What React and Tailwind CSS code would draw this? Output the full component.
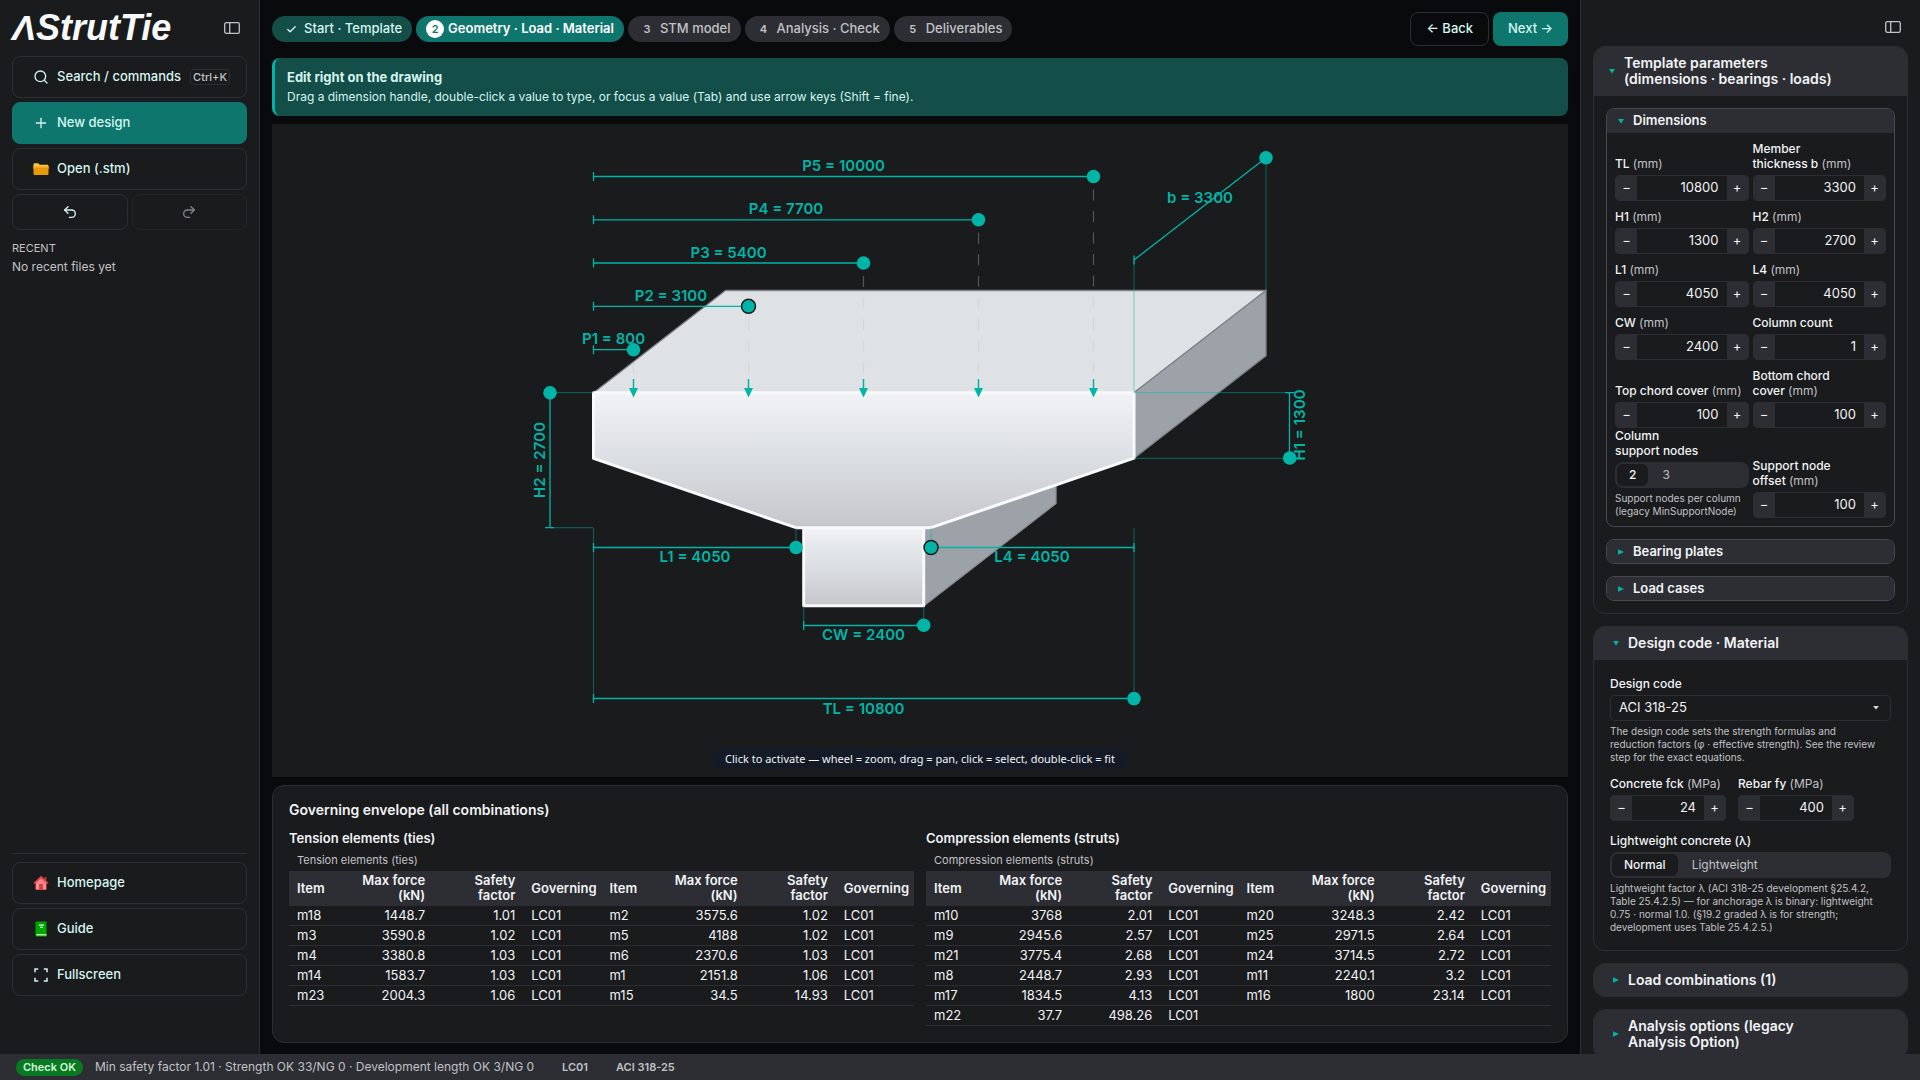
import { useState } from "react";
import { Search, Plus, Undo2, Redo2, Check } from "lucide-react";
import { twMerge } from "tailwind-merge";

const ties = [
  ["m18", "1448.7", "1.01", "LC01", "m2", "3575.6", "1.02", "LC01"],
  ["m3", "3590.8", "1.02", "LC01", "m5", "4188", "1.02", "LC01"],
  ["m4", "3380.8", "1.03", "LC01", "m6", "2370.6", "1.03", "LC01"],
  ["m14", "1583.7", "1.03", "LC01", "m1", "2151.8", "1.06", "LC01"],
  ["m23", "2004.3", "1.06", "LC01", "m15", "34.5", "14.93", "LC01"],
];

const struts = [
  ["m10", "3768", "2.01", "LC01", "m20", "3248.3", "2.42", "LC01"],
  ["m9", "2945.6", "2.57", "LC01", "m25", "2971.5", "2.64", "LC01"],
  ["m21", "3775.4", "2.68", "LC01", "m24", "3714.5", "2.72", "LC01"],
  ["m8", "2448.7", "2.93", "LC01", "m11", "2240.1", "3.2", "LC01"],
  ["m17", "1834.5", "4.13", "LC01", "m16", "1800", "23.14", "LC01"],
  ["m22", "37.7", "498.26", "LC01", "", "", "", ""],
];

const steps = [
  { title: "Start · Template", state: "done" },
  { title: "Geometry · Load · Material", state: "active" },
  { title: "STM model", state: "todo" },
  { title: "Analysis · Check", state: "todo" },
  { title: "Deliverables", state: "todo" },
];

const stepClasses = {
  done: "bg-[#134e48] text-[#d5f5f0] font-medium",
  active: "bg-[#0f766e] text-white font-semibold",
  todo: "bg-[#2c2e33] text-[#c1c2c5] font-medium",
};

/* ---------- icons ---------- */

const PanelIcon = () => (
  <svg width="16" height="12" viewBox="0 0 16 12" fill="none" stroke="#c1c2c5" strokeWidth="1.3">
    <rect x="0.7" y="0.7" width="14.6" height="10.6" rx="1.6" />
    <path d="M5.7 0.7v10.6" />
  </svg>
);

const FolderIcon = () => (
  <svg width="16" height="16" viewBox="0 0 16 16">
    <path d="M0.5 3.4q0-1.2 1.2-1.2h3.6l1.4 1.6h7.6q1.2 0 1.2 1.2v3h-15z" fill="#ffc83d" />
    <path d="M0.5 5.6h15v7.2q0 1.2-1.2 1.2H1.7q-1.2 0-1.2-1.2z" fill="#e89a08" />
    <path d="M0.5 5.4h15v1.2h-15z" fill="#ffb02e" />
  </svg>
);

const HomeIcon = () => (
  <svg width="16" height="16" viewBox="0 0 16 16">
    <path d="M11.3 2h2v4h-2z" fill="#c0392f" />
    <path d="M2.6 7.6 8 2.6l5.4 5v7.2H2.6z" fill="#ff8687" />
    <path d="M8 0.8 0.4 7.9l1.2 1.2L8 3.4l6.4 5.7 1.2-1.2z" fill="#e0444a" />
    <path d="M6.2 9h3.6v5.8H6.2z" fill="#d33b42" />
  </svg>
);

const BookIcon = () => (
  <svg width="16" height="16" viewBox="0 0 16 16">
    <path d="M2.5 1.6q0-1.1 1.1-1.1h9.9v15H3.6q-1.1 0-1.1-1.1z" fill="#00a600" />
    <path d="M3.4 13h10.1v1.5H3.4z" fill="#b9e8a0" />
    <path d="M6 3.5h5v1.2H6zM7 5.8h3v1H7z" fill="#eafbe4" />
  </svg>
);

const FullscreenIcon = () => (
  <svg width="16" height="16" viewBox="0 0 16 16" fill="none" stroke="#d5f5f0" strokeWidth="1.5">
    <path d="M2 5.2V2h3.2M10.8 2H14v3.2M14 10.8V14h-3.2M5.2 14H2v-3.2" />
  </svg>
);

const Caret = ({ open }) => (
  <svg width="8" height="8" viewBox="0 0 8 8" fill="#00b5a7" className="shrink-0">
    {open ? <path d="M1 2h6L4 6.4z" /> : <path d="M1 1.2v5.6L7 4z" />}
  </svg>
);

/* ---------- sidebar ---------- */

const SideButton = (props) => {
  const { icon, title, className = "", children } = props;
  const defaultClasses =
    "flex h-[42px] w-full shrink-0 items-center gap-2 rounded-lg border border-[#2c2e33] px-5 text-[13px] font-medium text-[#d5f5f0]";
  return (
    <button type="button" className={twMerge(defaultClasses, className)}>
      {icon}
      <span>{title}</span>
      {children}
    </button>
  );
};

const Sidebar = () => (
  <aside className="flex w-[260px] shrink-0 flex-col border-r border-[#2c2e33] bg-[#1a1b1d] px-3">
    <div className="flex h-14 shrink-0 items-center justify-between pr-[7px]">
      <h1 className="font-['Liberation_Sans',sans-serif] text-[36px] leading-9 font-bold text-[#f8f9fa] italic">
        ΛStrutTie
      </h1>
      <button type="button" aria-label="Toggle sidebar">
        <PanelIcon />
      </button>
    </div>

    <nav className="flex flex-col gap-1">
      <SideButton icon={<Search size={16} />} title="Search / commands" className="pr-4">
        <kbd className="ml-auto rounded border border-[#2c2e33] px-0.5 font-['Inter',sans-serif] text-[11px] leading-[14px] text-[#c1c2c5]">
          Ctrl+K
        </kbd>
      </SideButton>
      <SideButton
        icon={<Plus size={16} />}
        title="New design"
        className="border-[#0f766e] bg-[#0f766e]"
      />
      <SideButton icon={<FolderIcon />} title="Open (.stm)" />
      <div className="grid grid-cols-2 gap-1">
        <button
          type="button"
          aria-label="Undo"
          className="flex h-9 items-center justify-center rounded-lg border border-[#2c2e33] text-[#d5f5f0]"
        >
          <Undo2 size={16} />
        </button>
        <button
          type="button"
          aria-label="Redo"
          disabled
          className="flex h-9 items-center justify-center rounded-lg border border-[#2c2e33] text-[#d5f5f0] opacity-50"
        >
          <Redo2 size={16} />
        </button>
      </div>
    </nav>

    <h2 className="mt-3 text-[11px] leading-[13px] text-[#c1c2c5]">RECENT</h2>
    <p className="mt-1 text-[12px] leading-4 text-[#c1c2c5]">No recent files yet</p>

    <div className="mt-auto mb-[58px] flex flex-col gap-1 border-t border-[#2c2e33] pt-2">
      <SideButton icon={<HomeIcon />} title="Homepage" />
      <SideButton icon={<BookIcon />} title="Guide" />
      <SideButton icon={<FullscreenIcon />} title="Fullscreen" />
    </div>
  </aside>
);

/* ---------- drawing ---------- */

const loadPoints = [
  { label: "P5 = 10000", x: 1093.5, y: 176.5 },
  { label: "P4 = 7700", x: 978.5, y: 219.8 },
  { label: "P3 = 5400", x: 863.5, y: 263 },
  { label: "P2 = 3100", x: 748.5, y: 306.3, ring: true },
  { label: "P1 = 800", x: 633.5, y: 349.7 },
];

const Handle = ({ x, y, ring }) => (
  <circle cx={x} cy={y} r={ring ? 7 : 6.8} fill="#00b5a7" stroke={ring ? "#1a1b1d" : "none"} strokeWidth="1.5" />
);

const DimText = ({ x, y, vertical, children }) => (
  <text
    x={x}
    y={y}
    textAnchor="middle"
    dominantBaseline="central"
    transform={vertical ? `rotate(-90 ${x} ${y})` : undefined}
    fill="#00b5a7"
    className="font-['Inter',sans-serif] text-[15px] font-semibold"
  >
    {children}
  </text>
);

const Drawing = () => (
  <svg viewBox="272 124 1296 653" className="block h-full w-full">
    <defs>
      <linearGradient id="front" x1="0" y1="0" x2="0" y2="1">
        <stop offset="0" stopColor="#f0f2f5" />
        <stop offset="0.5" stopColor="#dbdee2" />
        <stop offset="1" stopColor="#c4c6cc" />
      </linearGradient>
    </defs>

    {/* back faces */}
    <g stroke="#80848a" strokeWidth="1.3" strokeLinejoin="round">
      <path d="M924 527V425l132-51v129.5L924 605.7z" fill="#9da1a8" stroke="#8b8f95" />
      <path d="M593.5 392.7 725.5 290.5H1266L1134 392.7z" fill="#dee2e5" />
      <path d="M1134 392.7 1266 290.5V355.8L1134 458.3z" fill="#9da1a8" />
    </g>

    {/* load guides */}
    <g stroke="#c1c2c5" strokeOpacity="0.35" strokeWidth="1.2" strokeDasharray="11 10.5">
      {loadPoints.map((p) => (
        <path key={p.label} d={`M${p.x} ${p.y + 13}V380`} />
      ))}
    </g>

    {/* front faces */}
    <g fill="url(#front)" stroke="#f8f9fa" strokeWidth="3" strokeLinejoin="round">
      <path d="M803.7 527.7h120v78h-120z" />
      <path d="M593.5 392.7H1134v65.5L931 527.7H796L593.5 458.3z" />
    </g>

    {/* extension lines */}
    <g stroke="#00b5a7" strokeOpacity="0.4" strokeWidth="1.2">
      <path d="M1134 260V392.7M1266 158V290M1134 392.7h156M1134 458.3h156" />
      <path d="M550 392.7h43M550 527.7h43" />
      <path d="M593.5 527.7v171M1134 527.7v171M796 527.7v20M931 527.7v20" />
      <path d="M803.7 605.7v20M923.7 605.7v20" />
    </g>

    {/* dimension lines with end ticks */}
    <g stroke="#00b5a7" strokeWidth="1.3" fill="none">
      {loadPoints.map((p) => (
        <path key={p.label} d={`M593.5 ${p.y - 4.5}v9m0 -4.5H${p.x}`} />
      ))}
      <path d="M1134 255.5v9m0-4.5L1266 157.7" />
      <path d="M1285 392.7h9m-4.5 0V458" />
      <path d="M550 392.7v135m-5 0h9" />
      <path d="M593.5 543v9m0-4.5H796M931 547.5h203m0-4.5v9" />
      <path d="M803.7 621v9m0-4.5h120" />
      <path d="M593.5 694v9m0-4.5H1134" />
    </g>

    {/* point loads */}
    {loadPoints.map((p) => (
      <g key={p.label}>
        <path d={`M${p.x} 379v11`} stroke="#00b5a7" strokeWidth="1.5" />
        <path d={`M${p.x - 4.5} 388h9l-4.5 9.5z`} fill="#00b5a7" />
      </g>
    ))}

    {loadPoints.map((p) => (
      <DimText key={p.label} x={(593.5 + p.x) / 2} y={p.y - 11}>
        {p.label}
      </DimText>
    ))}
    <DimText x={1200} y={197}>b = 3300</DimText>
    <DimText x={1299} y={425} vertical>H1 = 1300</DimText>
    <DimText x={539} y={460} vertical>H2 = 2700</DimText>
    <DimText x={695} y={556}>L1 = 4050</DimText>
    <DimText x={1032} y={556}>L4 = 4050</DimText>
    <DimText x={863.5} y={634}>CW = 2400</DimText>
    <DimText x={863.5} y={708}>TL = 10800</DimText>

    {loadPoints.map((p) => (
      <Handle key={p.label} x={p.x} y={p.y} ring={p.ring} />
    ))}
    <Handle x={1266} y={157.7} />
    <Handle x={1289.7} y={458} />
    <Handle x={550} y={392.7} />
    <Handle x={796} y={547.5} />
    <Handle x={931} y={547.5} ring />
    <Handle x={923.7} y={625.3} />
    <Handle x={1134} y={698.6} />
  </svg>
);

/* ---------- envelope ---------- */

const headCells = ["Item", "Max force (kN)", "Safety factor", "Governing"];
const isNumeric = (i) => i % 4 === 1 || i % 4 === 2;

const EnvelopeTable = ({ title, rows }) => (
  <section className="min-w-0">
    <h3 className="text-[13px] leading-4 font-semibold">{title}</h3>
    <table className="mt-2 w-full table-fixed text-[13px] leading-[15px]">
      <caption className="px-2 pb-1 text-left text-[11px] leading-[13px] text-[#c1c2c5]">
        {title}
      </caption>
      <colgroup>
        {[0, 1].map((i) => [
          <col key={`a${i}`} className="w-[54px]" />,
          <col key={`b${i}`} className="w-[90px]" />,
          <col key={`c${i}`} className="w-[90px]" />,
          <col key={`d${i}`} className="w-[78px]" />,
        ])}
      </colgroup>
      <thead className="bg-[#2c2e33]">
        <tr>
          {[...headCells, ...headCells].map((cell, i) => (
            <th
              key={i}
              scope="col"
              className={`border-b border-[#2c2e33] px-2 py-0.5 font-semibold ${
                isNumeric(i) ? "text-right" : "text-left"
              }`}
            >
              {cell}
            </th>
          ))}
        </tr>
      </thead>
      <tbody>
        {rows.map((row) => (
          <tr key={row[0]} className="border-b border-[#2c2e33]">
            {row.map((cell, i) => (
              <td key={i} className={`px-2 py-0.5 ${isNumeric(i) ? "text-right" : ""}`}>
                {cell}
              </td>
            ))}
          </tr>
        ))}
      </tbody>
    </table>
  </section>
);

const Workspace = () => (
  <main className="flex min-w-0 flex-1 flex-col px-3 pt-3 pb-[11px]">
    <div className="flex items-center justify-between">
      <ol className="flex gap-1">
        {steps.map((step, i) => (
          <li key={step.title}>
            <button
              type="button"
              className={`flex h-[26px] items-center gap-1 rounded-full px-[10px] text-[13px] ${stepClasses[step.state]}`}
            >
              <span
                className={`flex size-[18px] items-center justify-center rounded-full text-[11px] font-semibold ${
                  step.state === "active" ? "bg-white text-[#0f766e]" : ""
                }`}
              >
                {step.state === "done" ? <Check size={11} strokeWidth={3} /> : i + 1}
              </span>
              {step.title}
            </button>
          </li>
        ))}
      </ol>
      <div className="flex gap-1">
        <button
          type="button"
          className="h-[34px] rounded-lg border border-[#2c2e33] px-[15px] text-[13px] font-medium text-[#d5f5f0]"
        >
          ← Back
        </button>
        <button
          type="button"
          className="h-[34px] rounded-lg bg-[#0f766e] px-[15px] text-[13px] font-medium text-[#d5f5f0]"
        >
          Next →
        </button>
      </div>
    </div>

    <div className="mt-3 rounded-lg border-l-3 border-[#00b5a7] bg-[#134e48] px-3 py-[9px] leading-5 text-[#d5f5f0]">
      <p className="text-[13px] font-bold">Edit right on the drawing</p>
      <p className="text-[12px]">
        Drag a dimension handle, double-click a value to type, or focus a value (Tab) and use arrow
        keys (Shift = fine).
      </p>
    </div>

    <div className="relative mt-2 min-h-0 flex-1 bg-[#1a1b1d]">
      <Drawing />
      <p className="absolute bottom-2 left-1/2 -translate-x-1/2 rounded-full bg-[#141a26] px-3 font-['Noto_Sans',sans-serif] text-[11px] leading-[21px] whitespace-nowrap text-[#f1f3f5]">
        Click to activate — wheel = zoom, drag = pan, click = select, double-click = fit
      </p>
    </div>

    <section className="mt-2 rounded-xl border border-[#2c2e33] bg-[#1a1b1d] p-4">
      <h2 className="text-[14px] leading-4 font-semibold">Governing envelope (all combinations)</h2>
      <div className="mt-3 grid grid-cols-2 gap-3">
        <EnvelopeTable title="Tension elements (ties)" rows={ties} />
        <EnvelopeTable title="Compression elements (struts)" rows={struts} />
      </div>
    </section>
  </main>
);

/* ---------- inspector ---------- */

const NumberField = (props) => {
  const { id, label, unit, value, className = "" } = props;
  const [current, setCurrent] = useState(value);
  const step = (by) => setCurrent(String(Number(current) + by));
  return (
    <div className={className}>
      <label
        htmlFor={id}
        className="mb-1 block text-[12px] leading-[15px] font-medium whitespace-pre-line"
      >
        {label} {unit && <span className="font-normal text-[#c1c2c5]">({unit})</span>}
      </label>
      <div className="flex h-[26px] overflow-hidden rounded border border-[#2c2e33]">
        <button
          type="button"
          aria-label={`Decrease ${label}`}
          onClick={() => step(-1)}
          className="w-[21px] shrink-0 bg-[#2c2e33] text-[13px]"
        >
          −
        </button>
        <input
          id={id}
          value={current}
          onChange={(e) => setCurrent(e.target.value)}
          className="w-full min-w-0 flex-1 px-2 text-right text-[13px] outline-none"
        />
        <button
          type="button"
          aria-label={`Increase ${label}`}
          onClick={() => step(1)}
          className="w-[21px] shrink-0 bg-[#2c2e33] text-[13px]"
        >
          +
        </button>
      </div>
    </div>
  );
};

const Segmented = ({ name, legend, options }) => {
  const [selected, setSelected] = useState(options[0]);
  return (
    <fieldset>
      <legend className="mb-1 text-[12px] leading-[15px] font-medium whitespace-pre-line">
        {legend}
      </legend>
      <div className="flex h-[26px] gap-0.5 rounded-lg bg-[#2c2e33] p-0.5">
        {options.map((option) => (
          <label
            key={option}
            className={`relative flex items-center rounded-md px-3 text-[12px] ${
              option === selected ? "bg-[#1a1b1d] font-medium text-[#f1f3f5]" : "text-[#c1c2c5]"
            }`}
          >
            <input
              type="radio"
              name={name}
              value={option}
              checked={option === selected}
              onChange={() => setSelected(option)}
              className="sr-only"
            />
            {option}
          </label>
        ))}
      </div>
    </fieldset>
  );
};

const Hint = ({ children }) => (
  <p className="mt-1 text-[10px] leading-[13px] text-[#c1c2c5]">{children}</p>
);

const Panel = ({ title, open, children, className = "" }) => {
  const defaultClasses =
    "flex w-full items-center gap-2 bg-[#2c2e33] py-2 pr-14 pl-[18px] text-left text-[14px] leading-4 font-semibold whitespace-pre-line";
  return (
    <section className="shrink-0 overflow-hidden rounded-xl border border-[#2c2e33]">
      <button
        type="button"
        aria-expanded={!!open}
        className={twMerge(defaultClasses, open && "border-b border-[#2c2e33]", className)}
      >
        <Caret open={open} />
        <span>{title}</span>
      </button>
      {children}
    </section>
  );
};

const SubPanel = ({ title, open, children }) => (
  <section className="overflow-hidden rounded-lg border border-[#45484e]">
    <button
      type="button"
      aria-expanded={!!open}
      className={`flex w-full items-center gap-2 bg-[#2c2e33] px-[10px] text-left text-[13px] leading-[23px] font-semibold ${
        open ? "border-b border-[#2c2e33]" : ""
      }`}
    >
      <Caret open={open} />
      <span>{title}</span>
    </button>
    {children}
  </section>
);

const dimensionFields = [
  { id: "tl", label: "TL", unit: "mm", value: "10800" },
  { id: "b", label: "Member\nthickness b", unit: "mm", value: "3300" },
  { id: "h1", label: "H1", unit: "mm", value: "1300" },
  { id: "h2", label: "H2", unit: "mm", value: "2700" },
  { id: "l1", label: "L1", unit: "mm", value: "4050" },
  { id: "l4", label: "L4", unit: "mm", value: "4050" },
  { id: "cw", label: "CW", unit: "mm", value: "2400" },
  { id: "count", label: "Column count", value: "1" },
  { id: "top-cover", label: "Top chord cover", unit: "mm", value: "100" },
  { id: "bottom-cover", label: "Bottom chord\ncover", unit: "mm", value: "100" },
];

const Inspector = () => (
  <aside className="flex w-[340px] shrink-0 flex-col overflow-hidden border-l border-[#2c2e33] bg-[#1a1b1d] px-3">
    <div className="flex h-[46px] shrink-0 items-center justify-end pt-2 pr-[7px]">
      <button type="button" aria-label="Toggle inspector">
        <PanelIcon />
      </button>
    </div>

    <div className="flex min-h-0 flex-col gap-3">
      <Panel
        open
        title={"Template parameters\n(dimensions · bearings · loads)"}
        className="pl-[14px]"
      >
        <div className="flex flex-col gap-3 p-3">
          <SubPanel title="Dimensions" open>
            <div className="grid grid-cols-2 items-end gap-x-1 px-2 pb-2">
              {dimensionFields.map((field) => (
                <NumberField key={field.id} {...field} className="pt-2" />
              ))}
              <div>
                <Segmented name="nodes" legend={"Column\nsupport nodes"} options={["2", "3"]} />
                <Hint>
                  Support nodes per column
                  <br />
                  (legacy MinSupportNode)
                </Hint>
              </div>
              <NumberField
                id="offset"
                label={"Support node\noffset"}
                unit="mm"
                value="100"
                className="pt-2"
              />
            </div>
          </SubPanel>
          <SubPanel title="Bearing plates" />
          <SubPanel title="Load cases" />
        </div>
      </Panel>

      <Panel title="Design code · Material" open>
        <div className="flex flex-col gap-3 p-4">
          <div>
            <label htmlFor="code" className="mb-1 block text-[12px] leading-[15px] font-medium">
              Design code
            </label>
            <div className="relative">
              <select
                id="code"
                className="block h-[26px] w-full appearance-none rounded border border-[#2c2e33] bg-[#1a1b1d] px-2 text-[13px]"
              >
                <option>ACI 318-25</option>
              </select>
              <svg
                width="6"
                height="4"
                viewBox="0 0 6 4"
                fill="#d5d7da"
                className="pointer-events-none absolute top-[11px] right-3"
              >
                <path d="M0 0h6L3 3.5z" />
              </svg>
            </div>
            <Hint>
              The design code sets the strength formulas and
              <br />
              reduction factors (φ · effective strength). See the review
              <br />
              step for the exact equations.
            </Hint>
          </div>
          <div className="flex gap-3">
            <NumberField id="fck" label="Concrete fck" unit="MPa" value="24" className="w-[116px]" />
            <NumberField id="fy" label="Rebar fy" unit="MPa" value="400" className="w-[116px]" />
          </div>
          <div>
            <Segmented
              name="lightweight"
              legend="Lightweight concrete (λ)"
              options={["Normal", "Lightweight"]}
            />
            <Hint>
              Lightweight factor λ (ACI 318-25 development §25.4.2,
              <br />
              Table 25.4.2.5) — for anchorage λ is binary: lightweight
              <br />
              0.75 · normal 1.0. (§19.2 graded λ is for strength;
              <br />
              development uses Table 25.4.2.5.)
            </Hint>
          </div>
        </div>
      </Panel>

      <Panel title="Load combinations (1)" />
      <Panel title={"Analysis options (legacy\nAnalysis Option)"} />
    </div>
  </aside>
);

const StatusBar = () => (
  <footer className="flex h-[26px] shrink-0 items-center bg-[#2c2e33] px-4 text-[#c1c2c5]">
    <span className="rounded-full bg-[#0a7a22] px-[7px] text-[11px] leading-[17px] font-semibold text-[#d3f9d8]">
      Check OK
    </span>
    <span className="ml-3 text-[12px]">
      Min safety factor 1.01 · Strength OK 33/NG 0 · Development length OK 3/NG 0
    </span>
    <span className="ml-7 text-[11px] font-semibold">LC01</span>
    <span className="ml-7 text-[11px] font-semibold">ACI 318-25</span>
  </footer>
);

export default function App() {
  return (
    <div className="flex h-screen flex-col overflow-hidden bg-[#090a0c] font-['Inter',sans-serif] text-[#f1f3f5]">
      <div className="flex min-h-0 flex-1">
        <Sidebar />
        <Workspace />
        <Inspector />
      </div>
      <StatusBar />
    </div>
  );
}
